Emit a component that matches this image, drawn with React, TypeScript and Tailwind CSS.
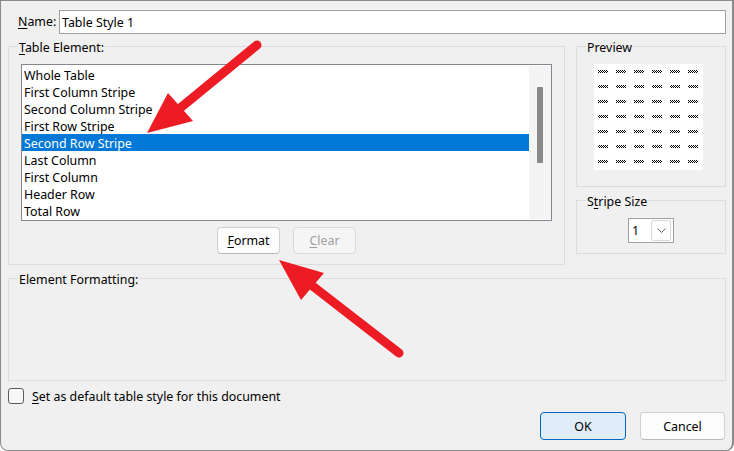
import React from "react";

const items = [
  "Whole Table",
  "First Column Stripe",
  "Second Column Stripe",
  "First Row Stripe",
  "Second Row Stripe",
  "Last Column",
  "First Column",
  "Header Row",
  "Total Row",
];

function PreviewGrid() {
  const cols = [4, 22, 40, 58, 76, 94];
  const rows = [6, 21, 36, 51, 66, 81, 96];
  return (
    <svg width="109" height="106" viewBox="0 0 109 106" shapeRendering="crispEdges">
      <defs>
        <pattern id="chk" width="2" height="2" patternUnits="userSpaceOnUse">
          <rect x="0" y="0" width="1" height="1" fill="#000" />
          <rect x="1" y="1" width="1" height="1" fill="#000" />
        </pattern>
      </defs>
      <rect x="0" y="0" width="109" height="106" fill="#fff" />
      {rows.map((y) =>
        cols.map((x) => (
          <rect key={`${x}-${y}`} x={x} y={y} width="10" height="3" fill="url(#chk)" />
        ))
      )}
    </svg>
  );
}

function Arrows() {
  return (
    <svg
      className="absolute left-0 top-0 pointer-events-none"
      width="734"
      height="451"
      viewBox="0 0 734 451"
    >
      <line x1="256" y1="44" x2="178" y2="108" stroke="#ed1c24" strokeWidth="9" strokeLinecap="round" />
      <polygon points="146,132 167,92 192,120" fill="#ed1c24" />
      <line x1="398" y1="352" x2="309" y2="283" stroke="#ed1c24" strokeWidth="9" strokeLinecap="round" />
      <polygon points="278,259 323,272 300,299" fill="#ed1c24" />
    </svg>
  );
}

export default function App() {
  return (
    <div className="relative w-[734px] h-[451px] bg-[#f0f0f0] border-t border-l border-b border-r-2 border-[#8a8a8a] rounded-b-[8px] overflow-hidden font-['Noto_Sans',sans-serif] text-[12.4px] text-black">
      <div className="flex flex-col pl-[7px] pr-[6px] pt-[9px]">
        {/* Name row */}
        <div className="flex items-center h-[24px]">
          <div className="w-[51px] pl-[10px] leading-[16px] -mt-[1px]">
            <u className="underline-offset-2">N</u>ame:
          </div>
          <div className="flex-1 h-[24px] bg-white border border-[#a0a0a0] flex items-center pl-[2px] leading-[16px] pt-[1px]">
            Table Style 1
          </div>
        </div>

        {/* Main row */}
        <div className="flex gap-[11px] mt-[12px]">
          {/* Table Element */}
          <div className="relative w-[557px] h-[219px] border border-[#dcdcdc] px-[12px] pt-[17px] pb-[10px] flex flex-col">
            <span className="absolute -top-[7px] left-[9px] px-[1px] bg-[#f0f0f0] leading-[16px]">
              <u className="underline-offset-2">T</u>able Element:
            </span>
            <div className="h-[157px] bg-white border border-[#828790] flex">
              <div className="w-[507px] pt-[1px] flex flex-col">
                {items.map((it) => (
                  <div
                    key={it}
                    className={
                      it === "Second Row Stripe"
                        ? "h-[17px] leading-[19px] pl-[2px] bg-[#0078d7] text-white"
                        : "h-[17px] leading-[19px] pl-[2px]"
                    }
                  >
                    {it}
                  </div>
                ))}
              </div>
              <div className="flex-1 my-[1px] bg-[#f4f4f4] pt-[21px] pl-[8px]">
                <div className="w-[6px] h-[76px] bg-[#898989] rounded-[1px]" />
              </div>
            </div>
            <div className="flex justify-center gap-[13px] mt-[6px]">
              <div className="w-[63px] h-[27px] bg-[#fdfdfd] border border-[#d0d0d0] border-b-[#b8b8b8] rounded-[4px] flex items-center justify-center leading-[16px] pt-[1px]">
                <span>
                  <u className="underline-offset-2">F</u>ormat
                </span>
              </div>
              <div className="w-[63px] h-[27px] bg-[#f5f5f5] border border-[#dadada] rounded-[4px] flex items-center justify-center leading-[16px] pt-[1px] text-[#a0a0a0]">
                <span>
                  <u className="underline-offset-2">C</u>lear
                </span>
              </div>
            </div>
          </div>

          {/* Right column */}
          <div className="w-[150px] flex flex-col gap-[13px]">
            <div className="relative h-[141px] border border-[#dcdcdc] pl-[17px] pt-[17px]">
              <span className="absolute -top-[7px] left-[9px] px-[1px] bg-[#f0f0f0] leading-[16px]">
                Preview
              </span>
              <PreviewGrid />
            </div>
            <div className="relative h-[54px] border border-[#dcdcdc] pt-[17px] flex justify-center">
              <span className="absolute -top-[7px] left-[9px] px-[1px] bg-[#f0f0f0] leading-[16px]">
                S<u className="underline-offset-2">t</u>ripe Size
              </span>
              <div className="w-[46px] h-[25px] bg-white border border-[#a0a0a0] flex items-center pl-[3px] pr-[2px]">
                <span className="flex-1 leading-[16px] pt-[1px]">1</span>
                <div className="w-[20px] h-[21px] border border-[#d8d8d8] rounded-[2px] bg-white flex items-center justify-center">
                  <svg width="9" height="5" viewBox="0 0 9 5">
                    <path d="M0.5 0.5 L4.5 4.5 L8.5 0.5" fill="none" stroke="#606060" strokeWidth="1" />
                  </svg>
                </div>
              </div>
            </div>
          </div>
        </div>

        {/* Element Formatting */}
        <div className="relative h-[103px] mt-[13px] border border-[#dcdcdc]">
          <span className="absolute -top-[7px] left-[9px] px-[1px] bg-[#f0f0f0] leading-[16px]">
            Element Formatting:
          </span>
        </div>

        {/* Checkbox */}
        <div className="flex items-center mt-[7px] h-[16px]">
          <div className="w-[16px] h-[16px] border border-[#5b5b5b] rounded-[3px] bg-[#f7f7f7]" />
          <span className="ml-[8px] leading-[16px] pt-[2px]">
            <u className="underline-offset-2">S</u>et as default table style for this document
          </span>
        </div>

        {/* Buttons */}
        <div className="flex justify-end gap-[14px] mt-[8px] mr-[1px]">
          <div className="w-[86px] h-[28px] bg-[#e0ecf8] border border-[#0067c0] rounded-[4px] flex items-center justify-center leading-[16px] pt-[1px]">
            OK
          </div>
          <div className="w-[85px] h-[28px] bg-[#fdfdfd] border border-[#d0d0d0] border-b-[#bcbcbc] rounded-[4px] flex items-center justify-center leading-[16px] pt-[1px]">
            Cancel
          </div>
        </div>
      </div>
      <Arrows />
    </div>
  );
}
